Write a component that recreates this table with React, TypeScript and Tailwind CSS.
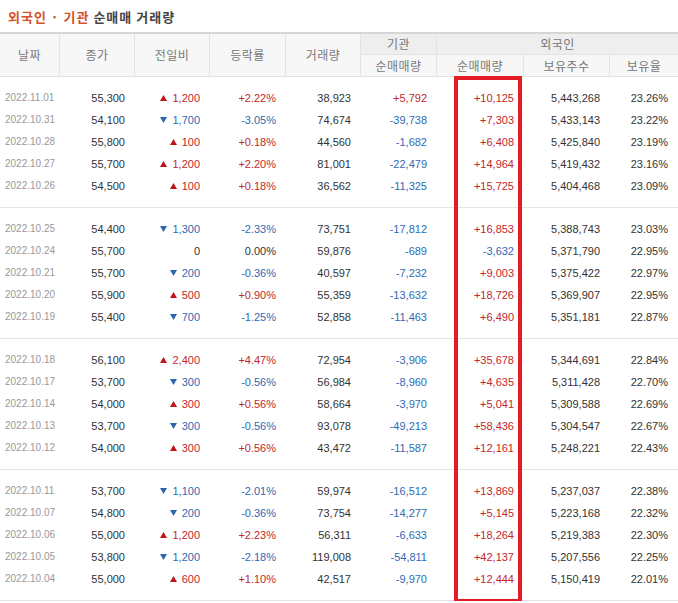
import React from 'react'

type Row = {
  date: string
  close: string
  diff: number
  rate: string
  volume: string
  inst: string
  foreign: string
  shares: string
  ratio: string
}

const groups: Row[][] = [
  [
    { date: '2022.11.01', close: '55,300', diff: 1200, rate: '+2.22%', volume: '38,923', inst: '+5,792', foreign: '+10,125', shares: '5,443,268', ratio: '23.26%' },
    { date: '2022.10.31', close: '54,100', diff: -1700, rate: '-3.05%', volume: '74,674', inst: '-39,738', foreign: '+7,303', shares: '5,433,143', ratio: '23.22%' },
    { date: '2022.10.28', close: '55,800', diff: 100, rate: '+0.18%', volume: '44,560', inst: '-1,682', foreign: '+6,408', shares: '5,425,840', ratio: '23.19%' },
    { date: '2022.10.27', close: '55,700', diff: 1200, rate: '+2.20%', volume: '81,001', inst: '-22,479', foreign: '+14,964', shares: '5,419,432', ratio: '23.16%' },
    { date: '2022.10.26', close: '54,500', diff: 100, rate: '+0.18%', volume: '36,562', inst: '-11,325', foreign: '+15,725', shares: '5,404,468', ratio: '23.09%' },
  ],
  [
    { date: '2022.10.25', close: '54,400', diff: -1300, rate: '-2.33%', volume: '73,751', inst: '-17,812', foreign: '+16,853', shares: '5,388,743', ratio: '23.03%' },
    { date: '2022.10.24', close: '55,700', diff: 0, rate: '0.00%', volume: '59,876', inst: '-689', foreign: '-3,632', shares: '5,371,790', ratio: '22.95%' },
    { date: '2022.10.21', close: '55,700', diff: -200, rate: '-0.36%', volume: '40,597', inst: '-7,232', foreign: '+9,003', shares: '5,375,422', ratio: '22.97%' },
    { date: '2022.10.20', close: '55,900', diff: 500, rate: '+0.90%', volume: '55,359', inst: '-13,632', foreign: '+18,726', shares: '5,369,907', ratio: '22.95%' },
    { date: '2022.10.19', close: '55,400', diff: -700, rate: '-1.25%', volume: '52,858', inst: '-11,463', foreign: '+6,490', shares: '5,351,181', ratio: '22.87%' },
  ],
  [
    { date: '2022.10.18', close: '56,100', diff: 2400, rate: '+4.47%', volume: '72,954', inst: '-3,906', foreign: '+35,678', shares: '5,344,691', ratio: '22.84%' },
    { date: '2022.10.17', close: '53,700', diff: -300, rate: '-0.56%', volume: '56,984', inst: '-8,960', foreign: '+4,635', shares: '5,311,428', ratio: '22.70%' },
    { date: '2022.10.14', close: '54,000', diff: 300, rate: '+0.56%', volume: '58,664', inst: '-3,970', foreign: '+5,041', shares: '5,309,588', ratio: '22.69%' },
    { date: '2022.10.13', close: '53,700', diff: -300, rate: '-0.56%', volume: '93,078', inst: '-49,213', foreign: '+58,436', shares: '5,304,547', ratio: '22.67%' },
    { date: '2022.10.12', close: '54,000', diff: 300, rate: '+0.56%', volume: '43,472', inst: '-11,587', foreign: '+12,161', shares: '5,248,221', ratio: '22.43%' },
  ],
  [
    { date: '2022.10.11', close: '53,700', diff: -1100, rate: '-2.01%', volume: '59,974', inst: '-16,512', foreign: '+13,869', shares: '5,237,037', ratio: '22.38%' },
    { date: '2022.10.07', close: '54,800', diff: -200, rate: '-0.36%', volume: '73,754', inst: '-14,277', foreign: '+5,145', shares: '5,223,168', ratio: '22.32%' },
    { date: '2022.10.06', close: '55,000', diff: 1200, rate: '+2.23%', volume: '56,311', inst: '-6,633', foreign: '+18,264', shares: '5,219,383', ratio: '22.30%' },
    { date: '2022.10.05', close: '53,800', diff: -1200, rate: '-2.18%', volume: '119,008', inst: '-54,811', foreign: '+42,137', shares: '5,207,556', ratio: '22.25%' },
    { date: '2022.10.04', close: '55,000', diff: 600, rate: '+1.10%', volume: '42,517', inst: '-9,970', foreign: '+12,444', shares: '5,150,419', ratio: '22.01%' },
  ],
]

const cols = 'grid grid-cols-[60px_75px_75px_76px_75px_76px_87px_86px_68px]'

/** sign colour for +/- values */
function tone(v: string) {
  if (v.startsWith('+')) return 'text-[#c1272d]'
  if (v.startsWith('-')) return 'text-[#2e6bb3]'
  return 'text-[#333]'
}

function Triangle({ up }: { up: boolean }) {
  return (
    <svg width="7" height="6" viewBox="0 0 7 6" className="mr-[5px] shrink-0">
      {up ? (
        <polygon points="3.5,0 7,6 0,6" fill="#c1121c" />
      ) : (
        <polygon points="0,0 7,0 3.5,6" fill="#2d66ad" />
      )}
    </svg>
  )
}

function DiffCell({ diff }: { diff: number }) {
  const txt = Math.abs(diff).toLocaleString('en-US')
  if (diff === 0) {
    return <div className="flex items-center justify-end pr-[10px] text-[#333]">0</div>
  }
  return (
    <div
      className={`flex items-center justify-end pr-[10px] ${diff > 0 ? 'text-[#c1272d]' : 'text-[#2e6bb3]'}`}
    >
      <Triangle up={diff > 0} />
      {txt}
    </div>
  )
}

function DataRow({ row }: { row: Row }) {
  return (
    <div className={`${cols} h-[22px] items-center text-[11px] leading-none`}>
      <div className="pl-[5px] text-[10px] text-[#999]">{row.date}</div>
      <div className="pr-[10px] text-right text-[#333]">{row.close}</div>
      <DiffCell diff={row.diff} />
      <div className={`pr-[10px] text-right ${tone(row.rate)}`}>{row.rate}</div>
      <div className="pr-[10px] text-right text-[#333]">{row.volume}</div>
      <div className={`pr-[10px] text-right ${tone(row.inst)}`}>{row.inst}</div>
      <div className={`pr-[10px] text-right ${tone(row.foreign)}`}>{row.foreign}</div>
      <div className="pr-[10px] text-right text-[#333]">{row.shares}</div>
      <div className="pr-[10px] text-right text-[#333]">{row.ratio}</div>
    </div>
  )
}

const hd = 'flex items-center justify-center border-[#e3e3e3]'

export default function App() {
  return (
    <div className="relative w-[678px] bg-white font-['Liberation_Sans',sans-serif]">
      <div className="flex h-[32px] items-center pl-[8px] pt-[2px] font-['Noto_Sans_CJK_KR',sans-serif] text-[13px] font-bold tracking-[1px]">
        <span className="text-[#d5512b]">외국인 · 기관</span>
        <span className="ml-[4px] text-[#444]">순매매 거래량</span>
      </div>

      <div
        className={`${cols} grid-rows-[21px_21px] border-t-2 border-b border-[#d6d6d6] border-b-[#e3e3e3] bg-[#f7f7f7] font-['Noto_Sans_CJK_KR',sans-serif] text-[12px] tracking-[0.5px] text-[#777]`}
      >
        <div className={`${hd} row-span-2 border-r`}>날짜</div>
        <div className={`${hd} row-span-2 border-r`}>종가</div>
        <div className={`${hd} row-span-2 border-r`}>전일비</div>
        <div className={`${hd} row-span-2 border-r`}>등락률</div>
        <div className={`${hd} row-span-2 border-r`}>거래량</div>
        <div className={`${hd} border-r border-b bg-[#eeeeee]`}>기관</div>
        <div className={`${hd} col-span-3 border-b bg-[#eeeeee]`}>외국인</div>
        <div className={`${hd} border-r`}>순매매량</div>
        <div className={`${hd} border-r`}>순매매량</div>
        <div className={`${hd} border-r`}>보유주수</div>
        <div className={hd}>보유율</div>
      </div>

      {groups.map((g, i) => (
        <div key={i} className="border-b border-[#e5e5e5] py-[10px]">
          {g.map((r) => (
            <DataRow key={r.date} row={r} />
          ))}
        </div>
      ))}

      {/* highlight box over foreign net column */}
      <div className="pointer-events-none absolute left-[454px] top-[76px] h-[527px] w-[68px] border-4 border-[#e31d25]" />
    </div>
  )
}
